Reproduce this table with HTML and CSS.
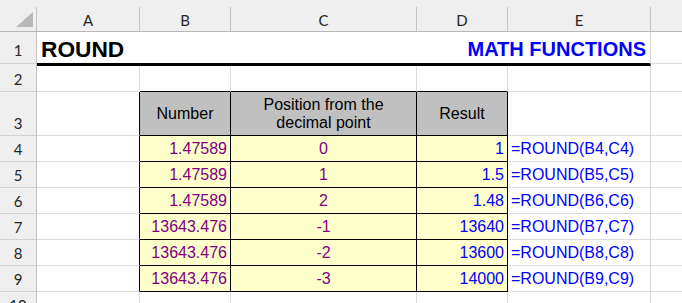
FILE: index.html
```html
<!DOCTYPE html>
<html lang="en">
<head>
<meta charset="utf-8">
<title>ROUND</title>
<link rel="stylesheet" href="styles.css">
</head>
<body>
<div class="sheet">
  <div class="corner"><div class="ch-in corner-in"><svg width="17" height="15" viewBox="0 0 17 15"><polygon points="17,0 17,15 0,15" fill="#b8b8b8"/></svg></div></div>
  <div class="ch"><div class="ch-in">A</div></div>
  <div class="ch"><div class="ch-in">B</div></div>
  <div class="ch"><div class="ch-in">C</div></div>
  <div class="ch"><div class="ch-in">D</div></div>
  <div class="ch"><div class="ch-in">E</div></div>
  <div class="ch"><div class="ch-in last"></div></div>

  <div class="rh rh1">1</div>
  <div class="title"><span class="t-left">ROUND</span><span class="t-right">MATH FUNCTIONS</span></div>
  <div class="c f1 last"></div>

  <div class="rh">2</div>
  <div class="c"></div>
  <div class="c hb"></div>
  <div class="c hb"></div>
  <div class="c hb"></div>
  <div class="c"></div>
  <div class="c last"></div>

  <div class="rh">3</div>
  <div class="c tr"></div>
  <div class="th">Number</div>
  <div class="th">Position from the<br>decimal point</div>
  <div class="th">Result</div>
  <div class="c"></div>
  <div class="c last"></div>

  <div class="rh">4</div>
  <div class="c tr"></div>
  <div class="td num">1.47589</div>
  <div class="td pos">0</div>
  <div class="td res">1</div>
  <div class="c fx">=ROUND(B4,C4)</div>
  <div class="c last"></div>

  <div class="rh">5</div>
  <div class="c tr"></div>
  <div class="td num">1.47589</div>
  <div class="td pos">1</div>
  <div class="td res">1.5</div>
  <div class="c fx">=ROUND(B5,C5)</div>
  <div class="c last"></div>

  <div class="rh">6</div>
  <div class="c tr"></div>
  <div class="td num">1.47589</div>
  <div class="td pos">2</div>
  <div class="td res">1.48</div>
  <div class="c fx">=ROUND(B6,C6)</div>
  <div class="c last"></div>

  <div class="rh">7</div>
  <div class="c tr"></div>
  <div class="td num">13643.476</div>
  <div class="td pos">-1</div>
  <div class="td res">13640</div>
  <div class="c fx">=ROUND(B7,C7)</div>
  <div class="c last"></div>

  <div class="rh">8</div>
  <div class="c tr"></div>
  <div class="td num">13643.476</div>
  <div class="td pos">-2</div>
  <div class="td res">13600</div>
  <div class="c fx">=ROUND(B8,C8)</div>
  <div class="c last"></div>

  <div class="rh">9</div>
  <div class="c tr"></div>
  <div class="td num">13643.476</div>
  <div class="td pos">-3</div>
  <div class="td res">14000</div>
  <div class="c fx">=ROUND(B9,C9)</div>
  <div class="c last"></div>

  <div class="rh">10</div>
  <div class="c"></div>
  <div class="c"></div>
  <div class="c"></div>
  <div class="c"></div>
  <div class="c"></div>
  <div class="c last"></div>
</div>
</body>
</html>
```

FILE: styles.css
```css
html, body {
  margin: 0;
  padding: 0;
  background: #ffffff;
  overflow: hidden;
}

body {
  width: 682px;
  height: 303px;
}

.sheet {
  display: grid;
  grid-template-columns: 37px 103px 91px 186px 91px 143px 31px;
  grid-template-rows: 32px 34px 26px 44px repeat(6, 26px) 26px;
  width: 682px;
  height: 303px;
  overflow: hidden;
  font-family: "Liberation Sans", Arial, sans-serif;
  font-size: 16px;
  color: #000;
}

.sheet > div {
  box-sizing: border-box;
  min-width: 0;
}

/* column headers */
.ch, .corner {
  background: #efefef;
  border-bottom: 1px solid #b8b8b8;
  display: flex;
  flex-direction: column;
}

.ch-in {
  flex: 1;
  margin-top: 7px;
  border-right: 1px solid #c2c2c2;
  display: flex;
  align-items: center;
  justify-content: center;
  font-family: Lato, "Noto Sans", sans-serif;
  font-size: 15px;
  color: #262626;
  padding-top: 1px;
}

.corner-in {
  align-items: flex-end;
  justify-content: flex-end;
  padding: 0 3px 4px 0;
}

.corner-in svg {
  display: block;
}

/* row headers */
.rh {
  background: #efefef;
  border-right: 1px solid #c2c2c2;
  border-bottom: 1px solid #d2d2d2;
  display: flex;
  align-items: flex-end;
  justify-content: center;
  padding-bottom: 3px;
  font-family: Lato, "Noto Sans", sans-serif;
  font-size: 15px;
  line-height: 18px;
  color: #262626;
}

.rh1 {
  border-bottom: none;
  background: linear-gradient(to bottom, #efefef 0, #efefef 31px, #d2d2d2 31px, #d2d2d2 32px, #efefef 32px);
  padding-bottom: 7px;
}

/* grid cells */
.c {
  border-right: 1px solid #dcdcdc;
  border-bottom: 1px solid #dcdcdc;
}

.sheet .last {
  border-right: none;
}

.f1 {
  border-bottom: none;
  background: linear-gradient(to bottom, transparent 0, transparent 31px, #dcdcdc 31px, #dcdcdc 32px, transparent 32px);
}

.hb {
  border-bottom-color: #000;
}

.tr {
  border-right-color: #000;
}

/* title row */
.title {
  grid-column: span 5;
  border-right: 1px solid #dcdcdc;
  border-bottom: 3px solid #000;
  display: flex;
  justify-content: space-between;
  align-items: flex-end;
  padding: 0 4px 1px 4px;
  font-weight: bold;
}

.t-left {
  font-size: 22.7px;
  line-height: 26px;
  color: #000;
}

.t-right {
  font-size: 20px;
  line-height: 26px;
  color: #0000ff;
}

/* table */
.th {
  background: #c0c0c0;
  border-right: 1px solid #000;
  border-bottom: 1px solid #000;
  display: flex;
  align-items: center;
  justify-content: center;
  text-align: center;
  line-height: 18px;
  color: #000;
}

.td {
  background: #ffffcc;
  border-right: 1px solid #000;
  border-bottom: 1px solid #000;
  display: flex;
  align-items: flex-end;
  padding: 0 3px 3px 3px;
  line-height: 18px;
  white-space: nowrap;
}

.num {
  justify-content: flex-end;
  color: #800080;
}

.pos {
  justify-content: center;
  color: #800080;
}

.res {
  justify-content: flex-end;
  color: #0000ff;
}

.fx {
  display: flex;
  align-items: flex-end;
  padding: 0 3px 3px 3px;
  line-height: 18px;
  color: #0000ff;
  white-space: nowrap;
}
```
